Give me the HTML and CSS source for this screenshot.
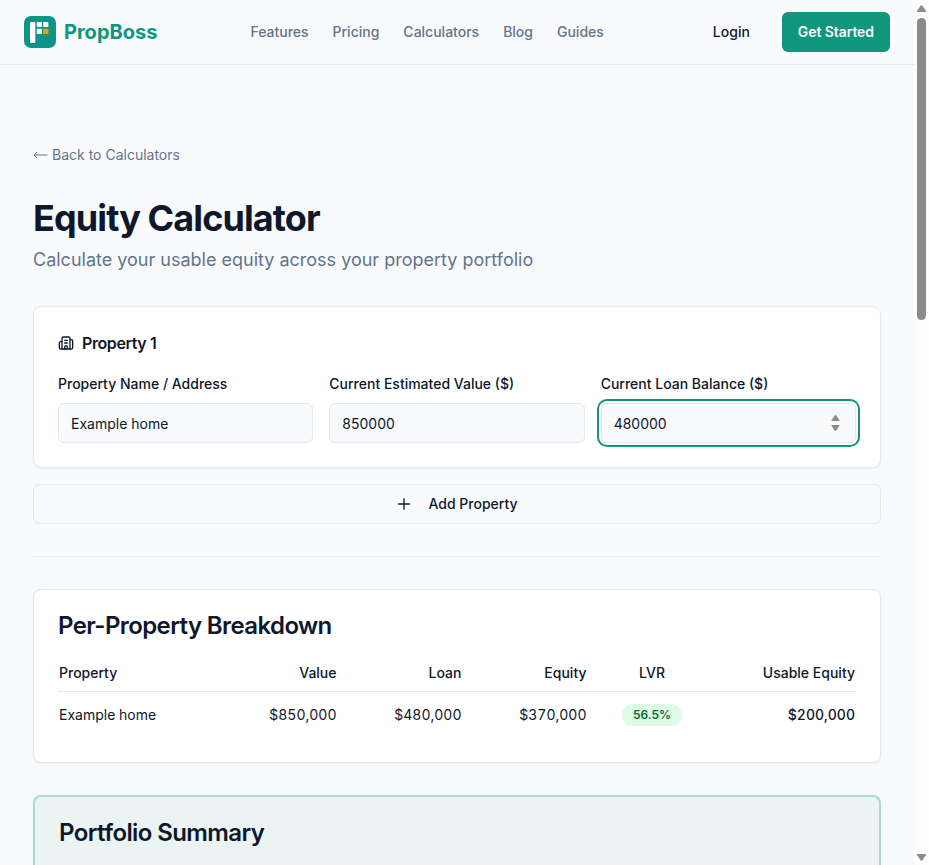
FILE: index.html
```html
<!DOCTYPE html>
<html lang="en">
<head>
    <meta charset="UTF-8">
    <meta name="viewport" content="width=device-width, initial-scale=1.0">
    <title>Equity Calculator - PropBoss</title>
    <link rel="stylesheet" href="styles.css">
</head>
<body>
    <div class="page">
        <header class="header">
            <a class="brand" href="#">
                <svg width="32" height="32" viewBox="0 0 32 32">
                    <rect width="32" height="32" rx="7" fill="#0d9488"/>
                    <rect x="6" y="6" width="5.3" height="21" rx="1" fill="#fff"/>
                    <rect x="12.8" y="6" width="5.2" height="5" rx="0.8" fill="#fff"/>
                    <rect x="19.2" y="6" width="5.2" height="5" rx="0.8" fill="#fff"/>
                    <rect x="12.8" y="12.7" width="5.2" height="5.2" rx="0.8" fill="#fff"/>
                    <rect x="19.2" y="12.7" width="5.2" height="5.2" rx="0.8" fill="#f59e0b"/>
                </svg>
                <span>PropBoss</span>
            </a>
            <nav class="nav">
                <a href="#">Features</a>
                <a href="#">Pricing</a>
                <a href="#">Calculators</a>
                <a href="#">Blog</a>
                <a href="#">Guides</a>
            </nav>
            <div class="actions">
                <a class="btn" href="#">Login</a>
                <a class="btn btn-primary" href="#">Get Started</a>
            </div>
        </header>

        <main class="main">
            <a class="back" href="#">
                <svg width="15" height="8" viewBox="0 0 15 8"><path d="M4 1 1 4l3 3M1 4h13.5"/></svg>
                Back to Calculators
            </a>
            <h1>Equity Calculator</h1>
            <p class="subtitle">Calculate your usable equity across your property portfolio</p>

            <section class="card property">
                <h3>
                    <svg class="icon" width="16" height="16" viewBox="0 0 24 24">
                        <path d="M10 12h4M10 8h4M14 21v-3a2 2 0 0 0-4 0v3"/>
                        <path d="M6 10H4a2 2 0 0 0-2 2v7a2 2 0 0 0 2 2h16a2 2 0 0 0 2-2V9a2 2 0 0 0-2-2h-2"/>
                        <path d="M6 21V5a2 2 0 0 1 2-2h8a2 2 0 0 1 2 2v16"/>
                    </svg>
                    Property 1
                </h3>
                <div class="fields">
                    <label class="field">
                        <span>Property Name / Address</span>
                        <input class="input" type="text" value="Example home">
                    </label>
                    <label class="field">
                        <span>Current Estimated Value ($)</span>
                        <input class="input" type="text" value="850000">
                    </label>
                    <div class="field">
                        <label for="loan">Current Loan Balance ($)</label>
                        <div class="input input-focus">
                            <input id="loan" type="text" value="480000">
                            <svg class="spinner" width="15" height="18" viewBox="0 0 15 18">
                                <path d="M3.2 7 6.4 1.8Q7.5 .3 8.6 1.8L11.8 7zM3.2 11h8.6l-3.2 5.2q-1.1 1.5-2.2 0z"/>
                            </svg>
                        </div>
                    </div>
                </div>
            </section>

            <button class="add">
                <svg class="icon" width="16" height="16" viewBox="0 0 24 24">
                    <path d="M4 12h16M12 4v16"/>
                </svg>
                Add Property
            </button>

            <hr class="divider">

            <section class="card breakdown">
                <h2>Per-Property Breakdown</h2>
                <table>
                    <thead>
                        <tr>
                            <th class="col-name">Property</th>
                            <th class="col-money">Value</th>
                            <th class="col-money">Loan</th>
                            <th class="col-money">Equity</th>
                            <th class="col-lvr">LVR</th>
                            <th class="col-usable">Usable Equity</th>
                        </tr>
                    </thead>
                    <tbody>
                        <tr>
                            <td class="col-name">Example home</td>
                            <td>$850,000</td>
                            <td>$480,000</td>
                            <td>$370,000</td>
                            <td class="col-lvr"><span class="badge">56.5%</span></td>
                            <td class="strong">$200,000</td>
                        </tr>
                    </tbody>
                </table>
            </section>

            <section class="card summary">
                <h2>Portfolio Summary</h2>
            </section>
        </main>
    </div>

    <div class="scrollbar">
        <svg width="9" height="7" viewBox="0 0 9 7"><path d="M0 7V6L3.6.8Q4.5-.3 5.4.8L9 6v1z"/></svg>
        <div class="thumb"></div>
        <svg width="9" height="7" viewBox="0 0 9 7"><path d="M0 0v1l3.6 5.2q.9 1.1 1.8 0L9 1V0z"/></svg>
    </div>
</body>
</html>
```
FILE: styles.css
```css
* {
    box-sizing: border-box;
}
body {
    display: flex;
    height: 865px;
    margin: 0;
    overflow: hidden;
    font-family: Inter, sans-serif;
    font-size: 14px;
    line-height: 20px;
    color: #0f172a;
    background: #f8fafc;
}
a {
    color: inherit;
    text-decoration: none;
}
h1, h2, h3, p {
    margin: 0;
}
.page {
    display: flex;
    flex: 1;
    flex-direction: column;
    min-width: 0;
}
.header {
    display: flex;
    flex-shrink: 0;
    align-items: center;
    justify-content: space-between;
    height: 65px;
    padding: 0 24px;
    border-bottom: 1px solid #e2e8f0;
}
.brand {
    display: flex;
    align-items: center;
    gap: 8px;
    font-size: 20px;
    font-weight: 700;
    color: #0f967c;
}
.nav {
    display: flex;
    gap: 24px;
    font-weight: 500;
    color: #64748b;
}
.actions {
    display: flex;
    gap: 16px;
}
.btn {
    padding: 10px 16px;
    border-radius: 6px;
    font-weight: 500;
}
.btn-primary {
    color: #f8fafc;
    background: #0f967c;
    font-weight: 600;
    letter-spacing: -0.08px;
}
.main {
    display: flex;
    flex: 1;
    flex-direction: column;
    min-height: 0;
    padding: 80px 33px 0;
}
.back {
    display: flex;
    align-items: center;
    gap: 4px;
    color: #64748b;
}
.back svg {
    fill: none;
    stroke: currentColor;
}
h1 {
    margin-top: 33px;
    font-size: 36px;
    line-height: 40px;
    letter-spacing: -0.025em;
}
.subtitle {
    margin: 8px 0 32px;
    font-size: 18px;
    line-height: 28px;
    color: #64748b;
}
.card {
    background: #fff;
    border: 1px solid #e2e8f0;
    border-radius: 8px;
    box-shadow: 0 1px 2px rgba(0, 0, 0, 0.05);
}
.icon {
    fill: none;
    stroke: currentColor;
    stroke-width: 2;
    stroke-linecap: round;
    stroke-linejoin: round;
}
.property {
    flex-shrink: 0;
    height: 162px;
    padding: 24px;
}
.property h3 {
    display: flex;
    align-items: center;
    gap: 8px;
    font-size: 16px;
    line-height: 24px;
    font-weight: 600;
    letter-spacing: -0.025em;
}
.fields {
    display: grid;
    grid-template-columns: repeat(3, 1fr);
    gap: 16px;
    margin-top: 19px;
}
.field {
    display: flex;
    flex-direction: column;
    gap: 9px;
    min-width: 0;
    font-weight: 500;
}
.input {
    width: 100%;
    height: 40px;
    padding: 0 12px;
    border: 1px solid #e2e8f0;
    border-radius: 6px;
    background: #f8fafc;
}
input {
    font: 400 14px/20px Inter, sans-serif;
    color: #0f172a;
}
.input-focus {
    display: flex;
    align-items: center;
    box-shadow: 0 0 0 2px #f8fafc, 0 0 0 4px #0f967c;
}
.input-focus input {
    flex: 1;
    min-width: 0;
    height: 38px;
    padding: 0;
    border: 0;
    outline: 0;
    background: none;
}
.spinner {
    background: #fafafa;
    fill: #8b8b8b;
}
.add {
    display: flex;
    flex-shrink: 0;
    align-items: center;
    justify-content: center;
    gap: 16px;
    width: 100%;
    height: 40px;
    margin-top: 16px;
    border: 1px solid #e2e8f0;
    border-radius: 6px;
    background: #f8fafc;
    font: 500 14px/20px Inter, sans-serif;
    color: #0f172a;
}
.divider {
    flex-shrink: 0;
    width: 100%;
    height: 1px;
    margin: 32px 0;
    border: 0;
    background: #e2e8f0;
}
h2 {
    font-size: 24px;
    line-height: 24px;
    font-weight: 600;
    letter-spacing: -0.025em;
}
.breakdown {
    flex-shrink: 0;
    height: 174px;
    padding: 24px;
}
table {
    width: 100%;
    margin-top: 17px;
    table-layout: fixed;
    border-collapse: collapse;
    font-variant-numeric: tabular-nums;
}
th, td {
    padding: 0 1px;
    text-align: right;
}
th {
    height: 36px;
    border-bottom: 1px solid #e2e8f0;
    font-weight: 500;
}
td {
    height: 47px;
}
.col-name {
    width: 154.5px;
    text-align: left;
}
.col-money {
    width: 125px;
}
.col-lvr {
    width: 129px;
    text-align: center;
}
.strong {
    font-weight: 500;
}
.badge {
    display: inline-block;
    padding: 3px 11px;
    border-radius: 999px;
    background: #dcfce7;
    color: #166534;
    font-size: 12px;
    line-height: 16px;
    font-weight: 600;
    font-variant-numeric: normal;
}
.summary {
    flex: 1;
    min-height: 0;
    margin-top: 32px;
    padding: 24px 24px 0;
    border: 2px solid #a9d9cf;
    border-bottom: 0;
    border-radius: 8px 8px 0 0;
    background: #ebf4f3;
}
.scrollbar {
    display: flex;
    flex-direction: column;
    align-items: center;
    width: 15px;
    padding: 5px 0 4px;
    background: #fcfcfc;
    fill: #8b8b8b;
}
.thumb {
    width: 9px;
    height: 302px;
    margin: 6px 0 auto;
    border-radius: 5px;
    background: #8b8b8b;
}
```
